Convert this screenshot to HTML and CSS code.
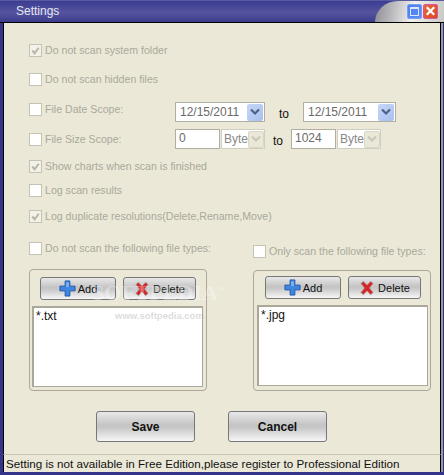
FILE: index.html
```html
<!DOCTYPE html>
<html lang="en">
<head>
<meta charset="utf-8">
<title>Settings</title>
<link rel="stylesheet" href="styles.css">
</head>
<body>
<div class="window">
  <header class="titlebar">
    <span class="title">Settings</span>
    <div class="controls">
      <span class="ctl ctl-max"><span class="max-glyph"></span></span>
      <span class="ctl ctl-close">
        <svg viewBox="0 0 14 14" width="14" height="14"><path d="M3 3l8 8M11 3l-8 8" stroke="#fff" stroke-width="2.400" fill="none"/></svg>
      </span>
    </div>
  </header>
  <main class="content">
    <div class="row r1"><span class="cb on"><svg viewBox="0 0 12 12"><path d="M2.500 6l2.500 3 4.500-6" stroke="#b8b6a8" stroke-width="2.200" fill="none"/></svg></span><label>Do not scan system folder</label></div>
    <div class="row r2"><span class="cb"></span><label>Do not scan hidden files</label></div>
    <div class="row r3">
      <span class="cb"></span><label class="scope">File Date Scope:</label>
      <span class="date"><span class="val">12/15/2011</span><span class="arrow"><svg viewBox="0 0 10 8" width="10" height="8"><path d="M1 1.500l4 4 4-4" stroke="#4d6185" stroke-width="2.200" fill="none"/></svg></span></span>
      <span class="to to-date">to</span>
      <span class="date d2"><span class="val">12/15/2011</span><span class="arrow"><svg viewBox="0 0 10 8" width="10" height="8"><path d="M1 1.500l4 4 4-4" stroke="#4d6185" stroke-width="2.200" fill="none"/></svg></span></span>
    </div>
    <div class="row r4">
      <span class="cb"></span><label class="scope">File Size Scope:</label>
      <span class="num">0</span>
      <span class="sel"><span class="val">Byte</span><span class="arrow off"><svg viewBox="0 0 10 8" width="10" height="8"><path d="M1 1.500l4 4 4-4" stroke="#c9c7b9" stroke-width="2.200" fill="none"/></svg></span></span>
      <span class="to to-size">to</span>
      <span class="num">1024</span>
      <span class="sel"><span class="val">Byte</span><span class="arrow off"><svg viewBox="0 0 10 8" width="10" height="8"><path d="M1 1.500l4 4 4-4" stroke="#c9c7b9" stroke-width="2.200" fill="none"/></svg></span></span>
    </div>
    <div class="row r5"><span class="cb on"><svg viewBox="0 0 12 12"><path d="M2.500 6l2.500 3 4.500-6" stroke="#b8b6a8" stroke-width="2.200" fill="none"/></svg></span><label>Show charts when scan is finished</label></div>
    <div class="row r6"><span class="cb"></span><label>Log scan results</label></div>
    <div class="row r7"><span class="cb on"><svg viewBox="0 0 12 12"><path d="M2.500 6l2.500 3 4.500-6" stroke="#b8b6a8" stroke-width="2.200" fill="none"/></svg></span><label>Log duplicate resolutions(Delete,Rename,Move)</label></div>

    <div class="columns">
      <section class="col col-l">
        <div class="row"><span class="cb"></span><label>Do not scan the following file types:</label></div>
        <div class="panel">
          <div class="btns">
            <button class="btn add"><svg viewBox="0 0 18 18" width="17" height="17"><path d="M6.500 1h5v5.500H17v5h-5.500V17h-5v-5.500H1v-5h5.500z" fill="#3f86e0" stroke="#1f55a8" stroke-width="1"/><path d="M7.500 2.500h3v5h-3z" fill="#7db2f0"/></svg>Add</button>
            <button class="btn del"><svg viewBox="0 0 18 18" width="16" height="16"><path d="M2 4l3-2.500 4 4 4-4 3 2.500-4 5 4 5-3 2.500-4-4-4 4-3-2.500 4-5z" fill="#d8252a" stroke="#a8b0a8" stroke-width="1"/></svg>Delete</button>
          </div>
          <div class="list">*.txt</div>
        </div>
      </section>
      <section class="col col-r">
        <div class="row"><span class="cb"></span><label>Only scan the following file types:</label></div>
        <div class="panel">
          <div class="btns">
            <button class="btn add"><svg viewBox="0 0 18 18" width="17" height="17"><path d="M6.500 1h5v5.500H17v5h-5.500V17h-5v-5.500H1v-5h5.500z" fill="#3f86e0" stroke="#1f55a8" stroke-width="1"/><path d="M7.500 2.500h3v5h-3z" fill="#7db2f0"/></svg>Add</button>
            <button class="btn del"><svg viewBox="0 0 18 18" width="16" height="16"><path d="M2 4l3-2.500 4 4 4-4 3 2.500-4 5 4 5-3 2.500-4-4-4 4-3-2.500 4-5z" fill="#d8252a" stroke="#a8b0a8" stroke-width="1"/></svg>Delete</button>
          </div>
          <div class="list">*.jpg</div>
        </div>
      </section>
    </div>

    <div class="actions">
      <button class="btn big">Save</button>
      <button class="btn big">Cancel</button>
    </div>

    <span class="wm wm-a">SOFTPEDIA<sup>™</sup></span>
    <span class="wm wm-b">www.softpedia.com</span>
  </main>
  <footer class="status">Setting is not available in Free Edition,please register to Professional Edition</footer>
</div>
</body>
</html>
```

FILE: styles.css
```css
* { box-sizing: border-box; }
html, body { margin: 0; padding: 0; }
body { width: 444px; height: 475px; overflow: hidden; font-family: "Liberation Sans", sans-serif; font-size: 10.600px; }
.window { width: 444px; height: 475px; display: flex; flex-direction: column; background: #34348a; }
.titlebar { position: relative; height: 23px; flex: none; display: flex; align-items: center; justify-content: space-between; padding: 0 6px 1px 16px; border-top: 1px solid #5a5aa0; border-bottom: 1px solid #000; background: linear-gradient(#3c3c92, #54549e 55%, #3c3c8c); }
.titlebar::before { content: ""; position: absolute; right: 0; top: 0; bottom: 0; width: 69px; border-top-left-radius: 24px 22px; background: linear-gradient(100deg, #8a8a92, #f0f0ee 55%, #c8c8c4); }
.title { color: #e6e6f2; font: 12px/1 "Liberation Sans", sans-serif; }
.controls { position: relative; display: flex; gap: 1px; }
.ctl { width: 15px; height: 15px; display: flex; align-items: center; justify-content: center; border-radius: 2px; }
.ctl-max { background: linear-gradient(135deg, #4a7ef0, #5f8ef2); border: 1px solid #7aa0f4; }
.max-glyph { width: 9px; height: 9px; border: 1px solid #dbe6fb; border-top-width: 2px; }
.ctl-close { background: linear-gradient(135deg, #e8683a, #d84a24); border: 1px solid #e050a0; }
.content { position: relative; flex: 1; margin: 0 3px; background: #ebe8d8; border-left: 1px solid #000; border-right: 1px solid #000; box-shadow: 2px 0 0 #9a9a9a; padding-left: 25px; color: #aaa89a; }
.row { display: flex; align-items: center; height: 14px; }
.row label { margin-left: 3px; white-space: nowrap; }
.cb { width: 13px; height: 13px; flex: none; background: #fff; border: 1px solid #c5c3b6; display: flex; }
.cb.on { background: #f4f2e8; }
.r1 { margin-top: 20px; }
.r2 { margin-top: 15px; }
.r3 { margin-top: 16px; }
.r4 { margin-top: 16px; }
.r5 { margin-top: 13px; }
.r6 { margin-top: 10px; }
.r7 { margin-top: 12px; }
.scope { width: 127px; flex: none; }
.r3 .scope, .r4 .scope { width: 130px; margin-left: 3px; }
.date { width: 90px; height: 20px; margin-top: 6px; background: #fff; border: 1px solid #b0aea0; display: flex; align-items: center; justify-content: space-between; padding: 0 1px 0 4px; color: #6a6a6a; font-size: 12px; flex: none; }
.d2 { width: 93px; }
.arrow { width: 16px; height: 17px; background: linear-gradient(135deg, #c6d6f6, #a8c0f0); border-radius: 2px; display: flex; align-items: center; justify-content: center; flex: none; }
.arrow.off { background: #ebe8d8; border: 1px solid #d8d6ca; }
.to { color: #111; font-size: 12px; flex: none; text-align: center; }
.to-date { width: 38px; padding-top: 10px; }
.to-size { width: 26px; padding-top: 4px; }
.num { height: 20px; width: 45px; background: #fff; border: 1px solid #b0aea0; padding: 0 3px; color: #6a6a6a; font-size: 12px; line-height: 16px; flex: none; }
.sel { margin-left: 1px; width: 44px; height: 20px; background: #fff; border: 1px solid #d0cec0; display: flex; align-items: center; justify-content: space-between; padding: 0 1px 0 2px; color: #888; font-size: 12px; flex: none; }
.columns { display: flex; margin-top: 18px; }
.col-l { width: 224px; }
.col-r { width: 178px; margin-top: 3px; }
.panel { margin-top: 14px; height: 122px; width: 178px; border: 1px solid #aca899; border-radius: 4px; padding: 7px 3px 0; }
.col-r .panel { margin-top: 12px; height: 121px; padding-top: 5px; }
.btns { display: flex; gap: 7px; padding-left: 7px; }
.col-r .btns { padding-left: 8px; }
.btn { font: 11px "Liberation Sans", sans-serif; color: #111; border: 1px solid #777; border-radius: 3px; background: linear-gradient(#e8e8e8, #c4c4c4 45%, #c8c8c8 55%, #f6f6f6); display: flex; align-items: center; justify-content: center; gap: 2px; padding: 0; }
.add { width: 76px; height: 23px; }
.del { width: 73px; height: 23px; gap: 3px; }
.list { margin-top: 6px; width: 171px; height: 81px; background: #fff; border: 1px solid #aca899; border-width: 2px 1px 1px 2px; padding: 1px 2px; color: #111; font-size: 12px; line-height: 14px; }
.col-l .list { margin-left: -1px; }
.actions { display: flex; gap: 33px; margin-top: 20px; padding-left: 67px; }
.big { width: 99px; height: 31px; font-weight: bold; font-size: 12px; }
.wm { position: absolute; white-space: nowrap; }
.wm-a { left: 88px; top: 257px; font: bold 22px "Liberation Serif", serif; color: rgba(255,255,255,.32); }
.wm-a sup { font-size: 8px; }
.wm-b { left: 111px; top: 287px; font: bold 9.500px "Liberation Sans", sans-serif; color: rgba(150,150,150,.35); }
.status { margin: 0 3px 3px; height: 18px; flex: none; background: #ebe8d8; border-top: 1px solid #c8c6b8; border-left: 1px solid #000; border-right: 1px solid #000; box-shadow: 2px 0 0 #9a9a9a; padding-left: 2px; color: #111; font: 11.650px/17px "Liberation Sans", sans-serif; white-space: nowrap; overflow: hidden; }
```
